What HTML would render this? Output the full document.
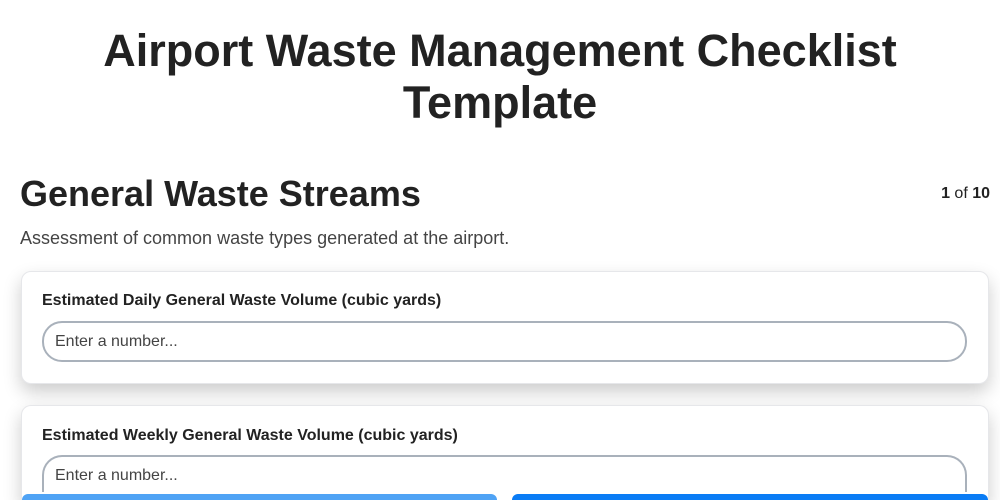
<!DOCTYPE html>
<html><head><style>
html,body{margin:0;width:1000px;height:500px;overflow:hidden}
body{background:#fff;font-family:"Liberation Sans",sans-serif;color:#222;position:relative}
h1{position:absolute;left:0;right:0;top:25px;margin:0;text-align:center;font-size:45px;line-height:52px;font-weight:bold;color:#222}
h2{position:absolute;left:20px;top:173px;margin:0;font-size:36px;line-height:42px;font-weight:bold}
.pg{position:absolute;right:10px;top:185px;font-size:16px}
.sub{position:absolute;left:20px;top:228px;font-size:18px;color:#444}
.card{position:absolute;left:21px;width:966px;background:#fff;border:1px solid #e6e7ea;border-radius:10px;box-shadow:0 8px 18px rgba(0,0,0,.2)}
.lab{position:absolute;left:20px;top:20px;font-size:16px;font-weight:bold}
.inp{position:absolute;left:20px;height:37px;border:2px solid #a9b1bb;border-radius:20px;font-size:16px;color:#444;line-height:37px;padding-left:11px;box-sizing:content-box}
.btn{position:absolute;top:494px;height:6px;border-radius:20px 20px 0 0}
</style></head><body>
<h1>Airport Waste Management Checklist<br>Template</h1>
<h2>General Waste Streams</h2>
<div class="pg"><b>1</b> of <b>10</b></div>
<div class="sub">Assessment of common waste types generated at the airport.</div>
<div class="card" style="top:271px;height:111px"><div class="lab">Estimated Daily General Waste Volume (cubic yards)</div><div class="inp" style="top:49px;width:910px">Enter a number...</div></div>
<div class="card" style="top:405px;height:95px;border-bottom:none;border-radius:10px 10px 0 0"><div class="lab" style="top:21px">Estimated Weekly General Waste Volume (cubic yards)</div><div class="inp" style="top:49px;width:910px;height:35px;border-bottom:none;border-radius:20px 20px 0 0">Enter a number...</div></div>
<div class="btn" style="left:22px;width:475px;background:#4fa3f5"></div>
<div class="btn" style="left:512px;width:476px;background:#0a7cf5"></div>
</body></html>
